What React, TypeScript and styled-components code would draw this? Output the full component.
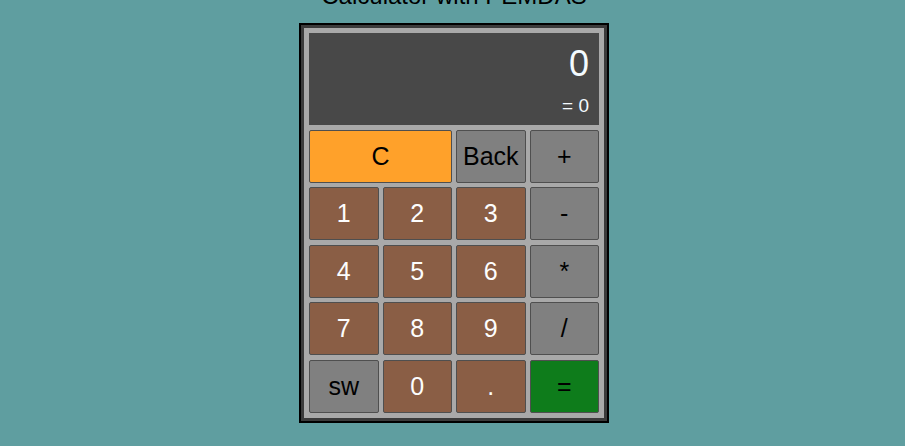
import React from "react";
import styled, { createGlobalStyle } from "styled-components";

const GlobalStyle = createGlobalStyle`
  html, body {
    margin: 0;
    padding: 0;
    background: #5f9ea0;
    font-family: "Liberation Sans", Arial, sans-serif;
  }
`;

const Page = styled.div`
  display: flex;
  flex-direction: column;
  align-items: center;
  padding-left: 3px;
`;

const Title = styled.h1`
  margin: -18px 0 13px;
  font-size: 24px;
  line-height: 28px;
  font-weight: normal;
  color: #000;
`;

const Frame = styled.div`
  width: 310px;
  box-sizing: border-box;
  border: 2px solid #000;
  background: #3b3b3b;
  padding: 3px;
`;

const Panel = styled.div`
  display: grid;
  grid-template-columns: repeat(4, 1fr);
  grid-template-rows: 92px repeat(5, 53px);
  column-gap: 4px;
  row-gap: 4.5px;
  background: #a9a9a9;
  padding: 5px;
`;

const Display = styled.div`
  grid-column: 1 / -1;
  background: #484848;
  color: #f4fbff;
  display: flex;
  flex-direction: column;
  align-items: flex-end;
  justify-content: flex-start;
  padding: 11px 10px 0 0;
`;

const Value = styled.div`
  font-size: 36px;
  line-height: 40px;
`;

const Result = styled.div`
  font-size: 19px;
  line-height: 22px;
  margin-top: 11px;
`;

type Kind = "clear" | "op" | "num" | "eq";

const bg: Record<Kind, string> = {
  clear: "#ffa12a",
  op: "#808080",
  num: "#8a5e45",
  eq: "#0e7c1b",
};

const Key = styled.button<{ $kind: Kind; $span?: number }>`
  grid-column: span ${(p) => p.$span ?? 1};
  background: ${(p) => bg[p.$kind]};
  color: ${(p) => (p.$kind === "num" ? "#fdfdfd" : "#000")};
  border: 1px solid #4f4f4f;
  border-radius: 2px;
  font-family: "Liberation Sans", Arial, sans-serif;
  font-size: 25px;
  padding: 0;
  margin: 0;
  cursor: pointer;
`;

const keys: { label: string; kind: Kind; span?: number }[] = [
  { label: "C", kind: "clear", span: 2 },
  { label: "Back", kind: "op" },
  { label: "+", kind: "op" },
  { label: "1", kind: "num" },
  { label: "2", kind: "num" },
  { label: "3", kind: "num" },
  { label: "-", kind: "op" },
  { label: "4", kind: "num" },
  { label: "5", kind: "num" },
  { label: "6", kind: "num" },
  { label: "*", kind: "op" },
  { label: "7", kind: "num" },
  { label: "8", kind: "num" },
  { label: "9", kind: "num" },
  { label: "/", kind: "op" },
  { label: "sw", kind: "op" },
  { label: "0", kind: "num" },
  { label: ".", kind: "num" },
  { label: "=", kind: "eq" },
];

export default function App() {
  return (
    <>
      <GlobalStyle />
      <Page>
        <Title>Calculator with PEMDAS</Title>
        <Frame>
          <Panel>
            <Display>
              <Value>0</Value>
              <Result>= 0</Result>
            </Display>
            {keys.map((k) => (
              <Key key={k.label} $kind={k.kind} $span={k.span}>
                {k.label}
              </Key>
            ))}
          </Panel>
        </Frame>
      </Page>
    </>
  );
}
